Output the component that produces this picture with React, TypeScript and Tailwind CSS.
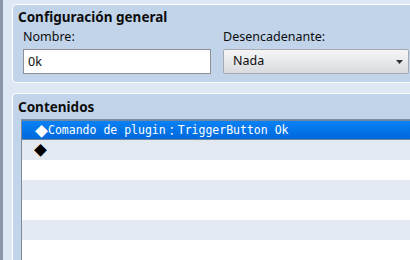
import React from 'react';

const UI = '"Noto Sans", "DejaVu Sans", sans-serif';
const MONO = '"DejaVu Sans Mono", "Noto Sans CJK JP", monospace';

const rows = [
  { kind: 'cmd', text: 'Comando de plugin', arg: 'TriggerButton Ok' },
  { kind: 'empty' },
  { kind: 'blank' },
  { kind: 'blank' },
  { kind: 'blank' },
  { kind: 'blank' },
  { kind: 'blank' },
];

function Diamond({ white }: { white?: boolean }) {
  return (
    <span
      className={`inline-block w-[13px] text-center text-[13px] leading-[18px] ${white ? 'text-white' : 'text-black'}`}
      style={{ fontFamily: '"Noto Sans CJK JP", sans-serif' }}
    >
      ◆
    </span>
  );
}

export default function App() {
  return (
    <div className="w-[410px] h-[260px] overflow-hidden bg-[#dde8f4] flex" style={{ fontFamily: UI }}>
      {/* window edge */}
      <div className="w-[3px] shrink-0 bg-[#8b97a8]" />

      <div className="flex-1 flex flex-col pl-[9px] pt-[4px] gap-[10px] min-w-0">
        {/* General settings */}
        <section className="w-[420px] h-[79px] shrink-0 rounded-tl-[4px] rounded-bl-[4px] border border-white bg-[#c1d4e9] flex flex-col">
          <h2 className="pl-[5px] pt-[2px] h-[22px] leading-[20px] text-[13.5px] font-bold text-[#0d0d0d]">
            Configuración general
          </h2>
          <div className="pl-[10px] flex gap-[12px]">
            <div className="flex flex-col w-[188px]">
              <label className="h-[22px] leading-[20px] text-[12.5px] text-[#0d0d0d]">Nombre:</label>
              <div className="h-[25px] border border-[#8d9096] bg-white pl-[4px] leading-[23px] text-[12.5px] text-[#0d0d0d]">
                0k
              </div>
            </div>
            <div className="flex flex-col w-[186px]">
              <label className="h-[22px] leading-[20px] text-[12.5px] text-[#0d0d0d]">Desencadenante:</label>
              <div className="h-[25px] rounded-[2px] border border-[#a5a9b0] bg-gradient-to-b from-[#f6f6f7] to-[#d9dbdf] pl-[9px] pr-[5px] flex items-center justify-between text-[12.5px] text-[#0d0d0d]">
                <span>Nada</span>
                <svg width="7" height="4" viewBox="0 0 7 4">
                  <path d="M0 0H7L3.5 4Z" fill="#333" />
                </svg>
              </div>
            </div>
          </div>
        </section>

        {/* Contents */}
        <section className="w-[420px] flex-1 rounded-tl-[4px] border-l border-t border-white bg-[#c1d4e9] flex flex-col">
          <h2 className="pl-[5px] pt-[3px] h-[25px] leading-[20px] text-[13.5px] font-bold text-[#0d0d0d]">
            Contenidos
          </h2>
          <div className="ml-[8px] flex-1 border-l border-t border-[#7f8b9b] bg-white flex flex-col" style={{ fontFamily: MONO }}>
            {rows.map((r, i) => {
              if (i === 0) {
                return (
                  <div
                    key={i}
                    className="h-[20px] shrink-0 border-y border-[#6c86a4] bg-gradient-to-b from-[#0a82f6] to-[#0068dc] pl-[13px] pt-[1px] flex items-center text-[11.5px] text-white whitespace-nowrap"
                  >
                    <Diamond white />
                    <span>{r.text}</span>
                    <span className="inline-block w-[12px] text-center" style={{ fontFamily: '"Noto Sans CJK JP", sans-serif' }}>：</span>
                    <span>{r.arg}</span>
                  </div>
                );
              }
              return (
                <div
                  key={i}
                  className={`h-[20px] shrink-0 pl-[12px] flex items-center ${i % 2 === 1 ? 'bg-[#e3e9f1]' : 'bg-white'}`}
                >
                  {r.kind === 'empty' && <Diamond />}
                </div>
              );
            })}
          </div>
        </section>
      </div>
    </div>
  );
}
